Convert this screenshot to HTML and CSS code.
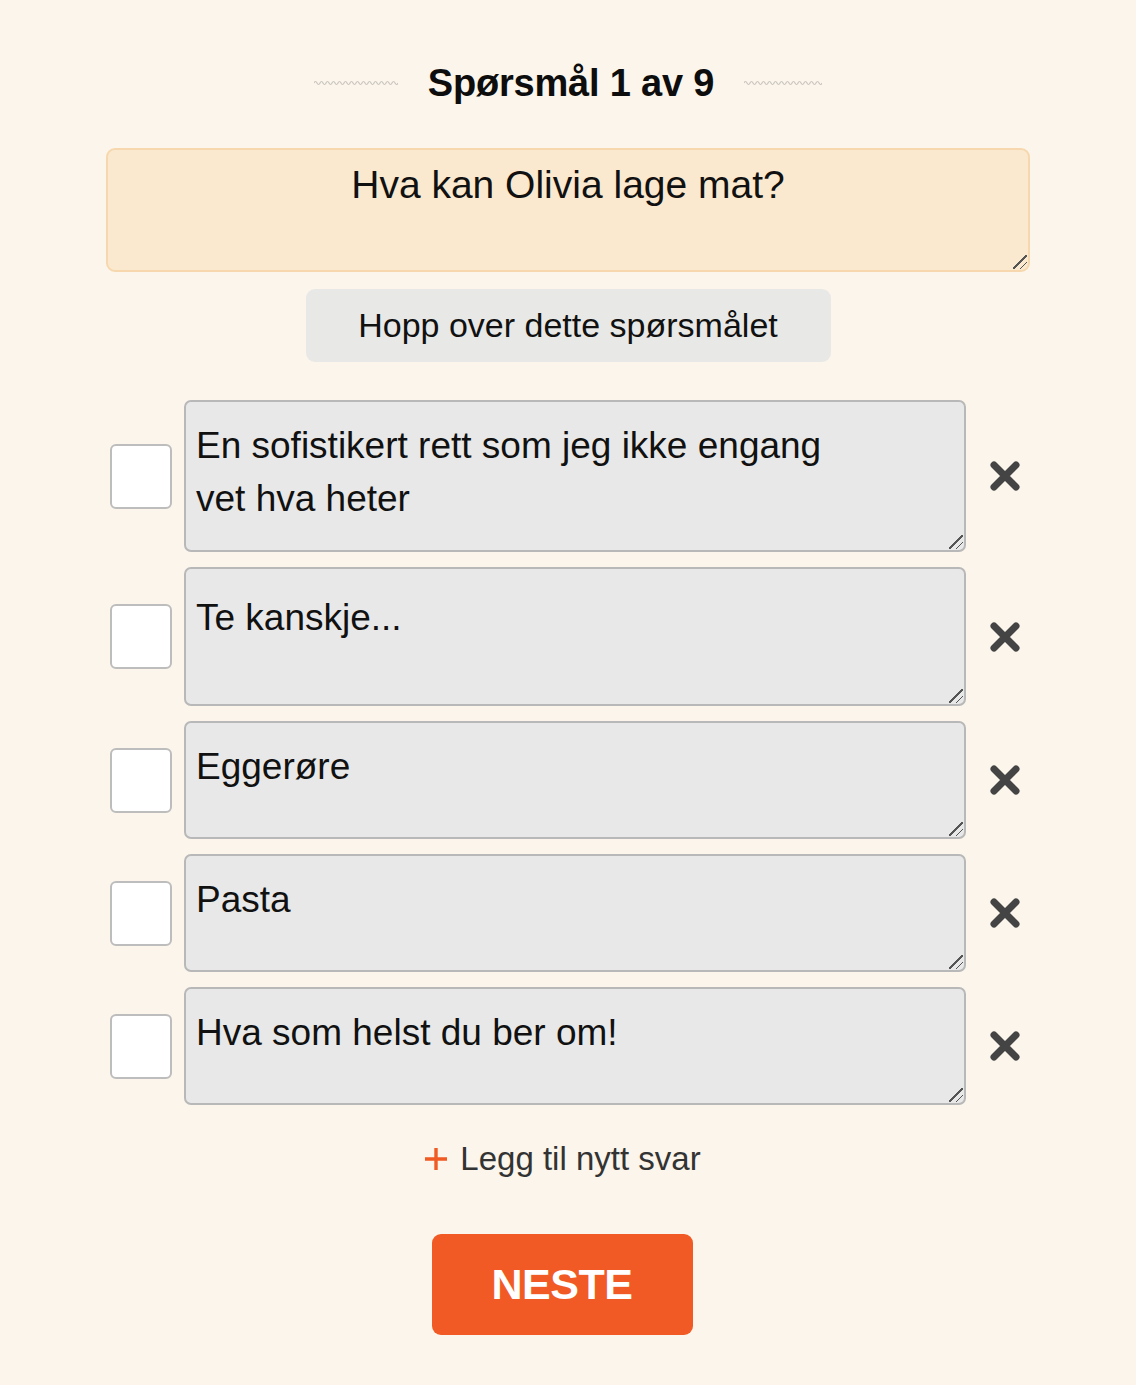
FILE: index.html
```html
<!DOCTYPE html>
<html lang="no">
<head>
<meta charset="utf-8">
<title>Spørsmål 1 av 9</title>
<link rel="stylesheet" href="styles.css">
</head>
<body>
<main class="quiz">
  <header class="title-row">
    <svg class="wave" width="84" height="6" viewBox="0 0 84 6"><path d="M0 3 Q1.5 0 3 3 T6 3 T9 3 T12 3 T15 3 T18 3 T21 3 T24 3 T27 3 T30 3 T33 3 T36 3 T39 3 T42 3 T45 3 T48 3 T51 3 T54 3 T57 3 T60 3 T63 3 T66 3 T69 3 T72 3 T75 3 T78 3 T81 3 T84 3" fill="none" stroke="#c9c5bf" stroke-width="1.2"/></svg>
    <h1 class="title">Spørsmål 1 av 9</h1>
    <svg class="wave" width="78" height="6" viewBox="0 0 78 6"><path d="M0 3 Q1.5 0 3 3 T6 3 T9 3 T12 3 T15 3 T18 3 T21 3 T24 3 T27 3 T30 3 T33 3 T36 3 T39 3 T42 3 T45 3 T48 3 T51 3 T54 3 T57 3 T60 3 T63 3 T66 3 T69 3 T72 3 T75 3 T78 3" fill="none" stroke="#c9c5bf" stroke-width="1.2"/></svg>
  </header>

  <textarea class="question">Hva kan Olivia lage mat?</textarea>

  <button class="skip" type="button">Hopp over dette spørsmålet</button>

  <ul class="answers">
    <li class="answer">
      <span class="check"></span>
      <textarea class="answer-text h-152">En sofistikert rett som jeg ikke engang
vet hva heter</textarea>
      <button class="remove" type="button" aria-label="Fjern"><svg width="32" height="32" viewBox="0 0 32 32"><path d="M5 5 L27 27 M27 5 L5 27" stroke="#444" stroke-width="7" stroke-linecap="round"/></svg></button>
    </li>
    <li class="answer">
      <span class="check"></span>
      <textarea class="answer-text h-139 pad-lower">Te kanskje...</textarea>
      <button class="remove" type="button" aria-label="Fjern"><svg width="32" height="32" viewBox="0 0 32 32"><path d="M5 5 L27 27 M27 5 L5 27" stroke="#444" stroke-width="7" stroke-linecap="round"/></svg></button>
    </li>
    <li class="answer">
      <span class="check"></span>
      <textarea class="answer-text h-118">Eggerøre</textarea>
      <button class="remove" type="button" aria-label="Fjern"><svg width="32" height="32" viewBox="0 0 32 32"><path d="M5 5 L27 27 M27 5 L5 27" stroke="#444" stroke-width="7" stroke-linecap="round"/></svg></button>
    </li>
    <li class="answer">
      <span class="check"></span>
      <textarea class="answer-text h-118">Pasta</textarea>
      <button class="remove" type="button" aria-label="Fjern"><svg width="32" height="32" viewBox="0 0 32 32"><path d="M5 5 L27 27 M27 5 L5 27" stroke="#444" stroke-width="7" stroke-linecap="round"/></svg></button>
    </li>
    <li class="answer">
      <span class="check"></span>
      <textarea class="answer-text h-118">Hva som helst du ber om!</textarea>
      <button class="remove" type="button" aria-label="Fjern"><svg width="32" height="32" viewBox="0 0 32 32"><path d="M5 5 L27 27 M27 5 L5 27" stroke="#444" stroke-width="7" stroke-linecap="round"/></svg></button>
    </li>
  </ul>

  <button class="add" type="button"><svg class="plus" width="26" height="26" viewBox="0 0 26 26"><path d="M13 2 V24 M2 13 H24" stroke="#f05a23" stroke-width="3.4"/></svg><span>Legg til nytt svar</span></button>

  <button class="next" type="button">NESTE</button>
</main>
</body>
</html>
```

FILE: styles.css
```css
* { box-sizing: border-box; }

html, body {
  margin: 0;
  padding: 0;
  background: #fbf5eb;
}

body {
  font-family: "Liberation Sans", Arial, Helvetica, sans-serif;
  color: #111;
}

.quiz {
  width: 924px;
  margin: 0 auto;
  padding-top: 60px;
  display: flex;
  flex-direction: column;
  align-items: center;
}

.title-row {
  display: flex;
  align-items: center;
  gap: 30px;
  height: 46px;
}

.wave { display: block; margin-top: 0; }

.title {
  margin: 0;
  font-size: 38px;
  line-height: 46px;
  font-weight: 700;
  letter-spacing: -0.2px;
  color: #0d0d0d;
}

textarea::-webkit-resizer {
  background-color: transparent;
  background-image:
    linear-gradient(135deg, transparent 46%, #555 46%, #555 54%, transparent 54%),
    linear-gradient(135deg, transparent 46%, #555 46%, #555 54%, transparent 54%);
  background-size: 14px 14px, 7px 7px;
  background-position: 0 0, 7px 7px;
  background-repeat: no-repeat;
}

.question {
  margin-top: 42px;
  width: 924px;
  height: 124px;
  background: #fae9cf;
  border: 2px solid #f7d8ae;
  border-radius: 9px;
  padding: 12px 20px 0;
  font-family: "Liberation Sans", Arial, sans-serif;
  font-size: 39px;
  line-height: 46px;
  text-align: center;
  color: #111;
  resize: vertical;
  outline: none;
}

.skip {
  margin-top: 17px;
  width: 525px;
  height: 73px;
  border: none;
  border-radius: 9px;
  background: #e8e8e6;
  font-family: "Liberation Sans", Arial, sans-serif;
  font-size: 34px;
  color: #111;
  padding: 0;
}

.answers {
  list-style: none;
  margin: 38px 0 0;
  padding: 0 0 0 4px;
  width: 924px;
  display: flex;
  flex-direction: column;
  gap: 15px;
}

.answer {
  display: flex;
  align-items: center;
}

.check {
  width: 62px;
  height: 65px;
  flex: none;
  background: #fff;
  border: 2px solid #bdbdbd;
  border-radius: 6px;
  margin-right: 12px;
}

.answer-text {
  width: 782px;
  flex: none;
  background: #e8e8e8;
  border: 2px solid #b8b8b8;
  border-radius: 7px;
  padding: 17px 10px 0;
  font-family: "Liberation Sans", Arial, sans-serif;
  font-size: 37px;
  line-height: 53px;
  color: #111;
  resize: vertical;
  outline: none;
  overflow: hidden;
}

.pad-lower { padding-top: 22px; }

.h-152 { height: 152px; }
.h-139 { height: 139px; }
.h-118 { height: 118px; }

.remove {
  margin-left: 23px;
  width: 32px;
  height: 32px;
  padding: 0;
  border: none;
  background: none;
  display: flex;
}

.add {
  margin-top: 34px;
  margin-right: 12px;
  display: flex;
  align-items: center;
  gap: 11px;
  border: none;
  background: none;
  padding: 0;
  height: 40px;
  font-family: "Liberation Sans", Arial, sans-serif;
  font-size: 33px;
  color: #333;
}

.plus { display: block; }

.next {
  margin-top: 55px;
  margin-right: 12px;
  width: 261px;
  height: 101px;
  border: none;
  border-radius: 9px;
  background: #f15a24;
  color: #fff;
  font-family: "Liberation Sans", Arial, sans-serif;
  font-weight: 700;
  font-size: 43px;
  letter-spacing: -0.5px;
  padding: 0;
}
```
